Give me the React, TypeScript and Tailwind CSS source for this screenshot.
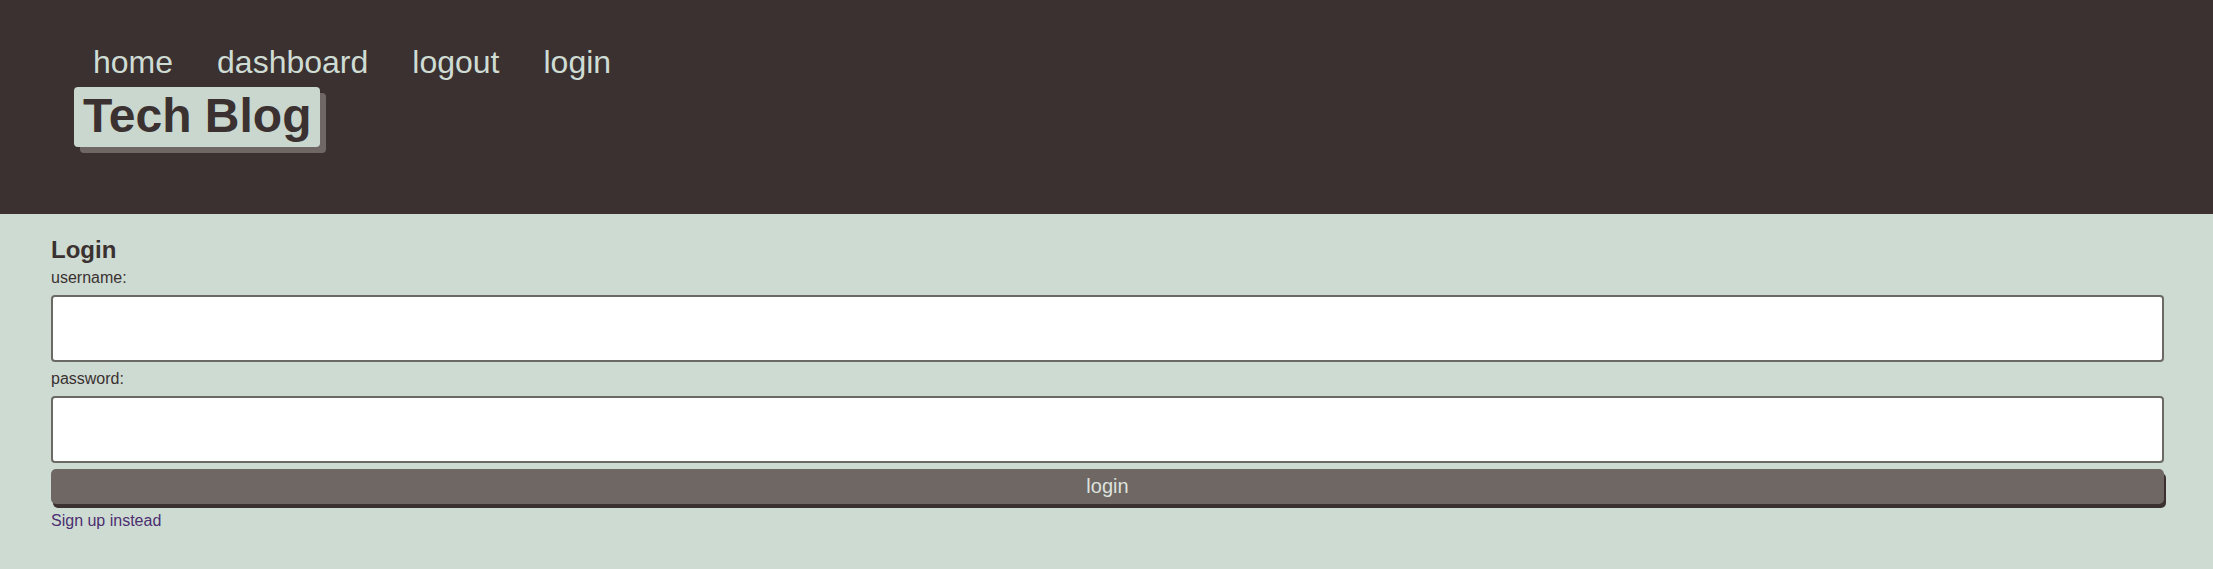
import React from "react";

export default function App() {
  const font = { fontFamily: '"Liberation Sans", Arial, sans-serif' };
  return (
    <div style={font} className="min-h-[569px] w-full bg-[#cedbd3] font-['Liberation_Sans',Arial,sans-serif]">
      <header className="h-[214px] bg-[#3a3130] pl-[74px] pt-[44px]">
        <nav className="ml-[19px] flex gap-[44px] text-[32px] leading-[37px] text-[#cfdcd4]">
          <a href="#" className="no-underline">home</a>
          <a href="#" className="no-underline">dashboard</a>
          <a href="#" className="no-underline">logout</a>
          <a href="#" className="no-underline">login</a>
        </nav>
        <div className="mt-[6px] flex">
          <h1 className="rounded-[4px] bg-[#c9d7cf] px-[9px] pt-[1px] pb-[4px] text-[48px] font-bold leading-[55px] text-[#3a3130] shadow-[6px_6px_0_#6f6764]">
            Tech Blog
          </h1>
        </div>
      </header>
      <main className="pl-[51px] pr-[49px] pt-[22px] pb-[40px]">
        <h2 className="text-[24px] font-bold leading-[28px] text-[#3a3130]">Login</h2>
        <form className="flex flex-col" onSubmit={(e) => e.preventDefault()}>
          <label className="mt-[5px] text-[16px] leading-[18px] text-[#3a3130]">username:</label>
          <input
            type="text"
            className="mt-[8px] h-[67px] w-full rounded-[4px] border-2 border-[#6a6964] bg-white outline-none"
          />
          <label className="mt-[8px] text-[16px] leading-[18px] text-[#3a3130]">password:</label>
          <input
            type="password"
            className="mt-[8px] h-[67px] w-full rounded-[4px] border-2 border-[#6a6964] bg-white outline-none"
          />
          <button
            type="submit"
            className="mt-[6px] h-[35px] w-full rounded-[5px] bg-[#6f6764] pb-[1px] text-[20px] leading-[24px] text-[#dde2de] shadow-[2px_4px_0_#3a3130]"
          >
            login
          </button>
          <a href="#" className="mt-[8px] text-[16px] leading-[18px] text-[#4b2f70]">
            Sign up instead
          </a>
        </form>
      </main>
    </div>
  );
}
